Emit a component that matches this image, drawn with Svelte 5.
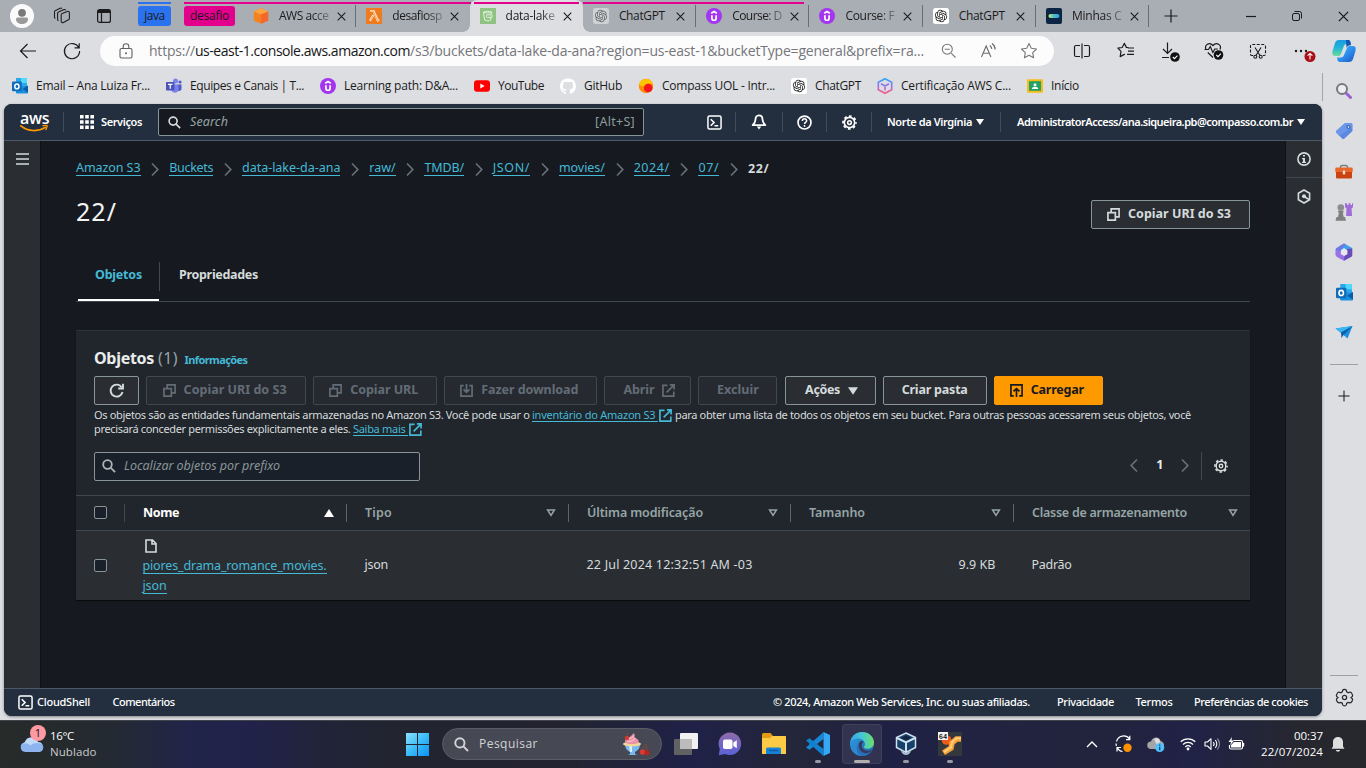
<script>
  // Spreads letter-spacing so that a run of text takes the given width.
  function fit(node, width) {
    const n = [...node.textContent].length;
    const natural = node.getBoundingClientRect().width;
    node.style.letterSpacing = `${(width - natural) / n}px`;
  }

  const openai =
    'M22.2819 9.8211a5.9847 5.9847 0 0 0-.5157-4.9108 6.0462 6.0462 0 0 0-6.5098-2.9A6.0651 6.0651 0 0 0 4.9807 4.1818a5.9847 5.9847 0 0 0-3.9977 2.9 6.0462 6.0462 0 0 0 .7427 7.0966 5.98 5.98 0 0 0 .511 4.9107 6.051 6.051 0 0 0 6.5146 2.9001A5.9847 5.9847 0 0 0 13.2599 24a6.0557 6.0557 0 0 0 5.7718-4.2058 5.9894 5.9894 0 0 0 3.9977-2.9001 6.0557 6.0557 0 0 0-.7475-7.0729zm-9.022 12.6081a4.4755 4.4755 0 0 1-2.8764-1.0408l.1419-.0804 4.7783-2.7582a.7948.7948 0 0 0 .3927-.6813v-6.7369l2.02 1.1686a.071.071 0 0 1 .038.052v5.5826a4.504 4.504 0 0 1-4.4945 4.4944zm-9.6607-4.1254a4.4708 4.4708 0 0 1-.5346-3.0137l.142.0852 4.783 2.7582a.7712.7712 0 0 0 .7806 0l5.8428-3.3685v2.3324a.0804.0804 0 0 1-.0332.0615L9.74 19.9502a4.4992 4.4992 0 0 1-6.1408-1.6464zM2.3408 7.8956a4.485 4.485 0 0 1 2.3655-1.9728V11.6a.7664.7664 0 0 0 .3879.6765l5.8144 3.3543-2.0201 1.1685a.0757.0757 0 0 1-.071 0l-4.8303-2.7865A4.504 4.504 0 0 1 2.3408 7.872zm16.5963 3.8558L13.1038 8.364 15.1192 7.2a.0757.0757 0 0 1 .071 0l4.8303 2.7913a4.4944 4.4944 0 0 1-.6765 8.1042v-5.6772a.79.79 0 0 0-.407-.667zm2.0107-3.0231l-.142-.0852-4.7735-2.7818a.7759.7759 0 0 0-.7854 0L9.409 9.2297V6.8974a.0662.0662 0 0 1 .0284-.0615l4.8303-2.7866a4.4992 4.4992 0 0 1 6.6802 4.66zM8.3065 12.863l-2.02-1.1638a.0804.0804 0 0 1-.038-.0567V6.0742a4.4992 4.4992 0 0 1 7.3757-3.4537l-.142.0805L8.704 5.459a.7948.7948 0 0 0-.3927.6813zm1.0976-2.3654l2.602-1.4998 2.6069 1.4998v2.9994l-2.5974 1.4997-2.6067-1.4997Z';
  const octocat =
    'M12 .297c-6.63 0-12 5.373-12 12 0 5.303 3.438 9.8 8.205 11.385.6.113.82-.258.82-.577 0-.285-.01-1.04-.015-2.04-3.338.724-4.042-1.61-4.042-1.61C4.422 18.07 3.633 17.7 3.633 17.7c-1.087-.744.084-.729.084-.729 1.205.084 1.838 1.236 1.838 1.236 1.07 1.835 2.809 1.305 3.495.998.108-.776.417-1.305.76-1.605-2.665-.3-5.466-1.332-5.466-5.93 0-1.31.465-2.38 1.235-3.22-.135-.303-.54-1.523.105-3.176 0 0 1.005-.322 3.3 1.23.96-.267 1.98-.399 3-.405 1.02.006 2.04.138 3 .405 2.28-1.552 3.285-1.23 3.285-1.23.645 1.653.24 2.873.12 3.176.765.84 1.23 1.91 1.23 3.22 0 4.61-2.805 5.625-5.475 5.92.42.36.81 1.096.81 2.22 0 1.606-.015 2.896-.015 3.286 0 .315.21.69.825.57C20.565 22.092 24 17.592 24 12.297c0-6.627-5.373-12-12-12';

  // Glyph table: [viewBox, markup]
  const glyphs = {
    user: ['0 0 24 24', '<circle cx="12" cy="12" r="12" fill="#fafafa"/><circle cx="12" cy="8.8" r="3.9" fill="#7a7a7a"/><path d="M6 15.2a1.6 1.6 0 0 1 1.6-1.6h8.8a1.6 1.6 0 0 1 1.6 1.6c0 3-2.7 4.8-6 4.8s-6-1.8-6-4.800z" fill="#9a9a9a"/>'],
    spaces: ['0 0 18 18', '<g fill="none" stroke="#1b1b1b" stroke-width="1.050" stroke-linejoin="round"><path d="M8.200 7.800a1.500 1.500 0 0 1 1-1.400l5-2a1.500 1.500 0 0 1 2.200 1.400v5.600a1.500 1.500 0 0 1-1 1.400l-5 2.700a1.500 1.500 0 0 1-2.200-1.300z"/><path d="M5.500 13.800a1.300 1.300 0 0 1-.9-1.300V6.300a1.500 1.500 0 0 1 1-1.400l5.400-2.300a1.500 1.500 0 0 1 1.800.6M2.400 11.400a1.300 1.300 0 0 1-.9-1.300V4.800a1.500 1.500 0 0 1 1-1.400L7.300 1.200a1.500 1.500 0 0 1 1.600.3"/></g>'],
    tabact: ['0 0 14 14', '<rect x=".6" y=".6" width="12.800" height="12.800" rx="2" fill="none" stroke="#1b1b1b" stroke-width="1.200"/><path d="M1 1h12v3H1z" fill="#1b1b1b"/><path d="M4.500 4v9" stroke="#1b1b1b" stroke-width="1.200"/>'],
    awscube: ['0 0 16 16', '<path d="M8 .3 15.200 3.400v9.200L8 15.700.8 12.600V3.400z" fill="#f58220"/><path d="M8 .3 15.200 3.400 8 6.600.8 3.400z" fill="#fba545"/><path d="M8 6.600 15.200 3.400v9.200L8 15.700z" fill="#f4682c"/>'],
    lambda: ['0 0 16 16', '<rect width="16" height="16" fill="#ee7b1d"/><path d="M4.300 3h3.200l4.200 9.300h1.600M7.300 7 4 12.800" fill="none" stroke="#fff3e4" stroke-width="2.200"/><path d="M4.600 3h2.600l4.200 9.300h1.500M7.200 7.200 4.300 12.400" fill="none" stroke="#ee7b1d" stroke-width=".7"/>'],
    bucket: ['0 0 16 16', '<rect width="16" height="16" fill="#8fc283"/><g fill="none" stroke="#e4f3df" stroke-width="1"><path d="M3.500 4.200 4.600 12c2 1.100 4.600 1.100 6 .2l.5-3.700M3.500 4.200c2-1.200 6-1.200 8.300 0l-.3 2.400M3.500 4.200c2 1.100 6 1.100 8.300 0"/><rect x="6.500" y="6.800" width="5.800" height="2.600" rx="1"/></g>'],
    gptgray: ['0 0 16 16', `<rect width="16" height="16" rx="2.500" fill="#cfd1d4"/><path transform="translate(1.800 1.800) scale(.517)" d="${openai}" fill="#66696c"/>`],
    gpt: ['0 0 16 16', `<rect width="16" height="16" rx="2.500" fill="#fff"/><path transform="translate(1.800 1.800) scale(.517)" d="${openai}" fill="#222"/>`],
    udemy: ['0 0 16 16', '<circle cx="8" cy="8" r="8" fill="#a435f0"/><path d="M5.200 5.300 8 3.500l2.800 1.800M5.900 7.200v3c0 2.700 4.200 2.700 4.200 0v-3" fill="none" stroke="#fff" stroke-width="1.700"/>'],
    minhas: ['0 0 16 16', '<defs><linearGradient id="mn"><stop offset="0" stop-color="#d8e86a"/><stop offset=".4" stop-color="#57c3c0"/><stop offset="1" stop-color="#2f9de0"/></linearGradient></defs><rect width="16" height="16" rx="2" fill="#0c2544"/><rect x="2.500" y="6" width="11" height="4" rx="2" fill="url(#mn)"/>'],
    x: ['0 0 10 10', '<path d="M.8.8 9.200 9.200M9.200.8.8 9.200" stroke="#1b1b1b" stroke-width="1.200" fill="none"/>'],
    plus: ['0 0 14 14', '<path d="M7 .5v13M.5 7h13" stroke="#1b1b1b" stroke-width="1.200"/>'],
    minus: ['0 0 10 10', '<path d="M0 5.500h10" stroke="#1b1b1b" stroke-width="1.200"/>'],
    restore: ['0 0 10 10', '<g fill="none" stroke="#1b1b1b"><rect x=".5" y="2.500" width="7" height="7" rx="1.500"/><path d="M2.500.5h5a2 2 0 0 1 2 2v5"/></g>'],
    back: ['0 0 18 18', '<path d="M17 9H1.500M8.500 2 1.500 9l7 7" fill="none" stroke="#1b1b1b" stroke-width="1.200"/>'],
    reload: ['0 0 18 18', '<path d="M15.700 5.500A7.600 7.600 0 1 0 16.600 9M16.200 1.200v4.600h-4.600" fill="none" stroke="#1b1b1b" stroke-width="1.200"/>'],
    lock: ['0 0 14 16', '<g fill="none" stroke="#5f6063" stroke-width="1.100"><rect x="1" y="5.500" width="12" height="9.500" rx="1.500"/><path d="M4.200 5.500V3.600a2.800 2.800 0 0 1 5.600 0v1.900"/></g><circle cx="7" cy="10.300" r="1" fill="#5f6063"/>'],
    zoomout: ['0 0 16 16', '<path d="M14.500 14.500 10.300 10.300M3.800 6.200h5" stroke="#76777a" stroke-width="1.100"/><circle cx="6.300" cy="6.200" r="5" fill="none" stroke="#76777a" stroke-width="1.100"/>'],
    aloud: ['0 0 18 16', '<path d="M1.500 14 6.200 3l4.700 11M3.200 10.300h6M9.800 2.500c1.300 1 1.900 2.200 2 3.500M12 .5c2.200 1.600 3.200 3.500 3.200 6" fill="none" stroke="#6b6c6f" stroke-width="1.100"/>'],
    star: ['0 0 18 18', '<path d="m9 1.500 2.300 4.800 5.200.7-3.800 3.600.9 5.200L9 13.300l-4.600 2.500.9-5.200L1.500 7l5.200-.7z" fill="none" stroke="#76777a" stroke-width="1.100" stroke-linejoin="round"/>'],
    split: ['0 0 18 18', '<path d="M7 3.500H3a1.500 1.500 0 0 0-1.500 1.500v8A1.500 1.500 0 0 0 3 14.500h4M11 3.500h4A1.500 1.500 0 0 1 16.500 5v8a1.500 1.500 0 0 1-1.500 1.500h-4M9 1.500v15" fill="none" stroke="#1b1b1b" stroke-width="1.200"/>'],
    favs: ['0 0 18 18', '<path d="M11.500 5.700 9.400 5.400 7.300 1.400 5.200 5.500.9 6.200 4 9.300l-.8 5.300 4.600-2.500M11 6h6M11 9.200h6M10 12.400h7" fill="none" stroke="#1b1b1b" stroke-width="1.200" stroke-linejoin="round"/>'],
    down: ['0 0 22 22', '<path d="M8.500 2.500v11M4 9l4.500 4.500L13 9M3 17.500h7" fill="none" stroke="#1b1b1b" stroke-width="1.200"/><circle cx="16" cy="17" r="4.800" fill="#111"/><path d="m13.800 17 1.700 1.700 2.900-3" fill="none" stroke="#fff" stroke-width="1.100"/>'],
    heart: ['0 0 22 22', '<path d="M3 9.500C1 5 6.500 1.500 10 5.500c3.500-4 9-.5 7 4M4.800 12.500 10 17.500M1.500 9.500h4l1.800-3 2.500 6 2-3.500h3" fill="none" stroke="#1b1b1b" stroke-width="1.200"/><circle cx="15.500" cy="15" r="4.800" fill="#111"/><path d="m13.300 15 1.700 1.700 2.900-3" fill="none" stroke="#fff" stroke-width="1.100"/>'],
    snip: ['0 0 18 18', '<path d="M4 13.500H3A1.500 1.500 0 0 1 1.500 12V4A1.500 1.500 0 0 1 3 2.500h12A1.500 1.500 0 0 1 16.500 4v8a1.500 1.500 0 0 1-1.500 1.500h-1" fill="none" stroke="#1b1b1b" stroke-width="1.100" stroke-dasharray="3 1.500"/><path d="m6 5.500 5 8M12 5.500l-5 8" stroke="#1b1b1b" stroke-width="1.100"/><g fill="none" stroke="#1b1b1b" stroke-width="1.100"><circle cx="6.300" cy="14.700" r="1.500"/><circle cx="11.700" cy="14.700" r="1.500"/></g>'],
    dots: ['0 0 22 22', '<g fill="#1b1b1b"><circle cx="5" cy="11" r="1.200"/><circle cx="10" cy="11" r="1.200"/><circle cx="15" cy="11" r="1.200"/></g><circle cx="19" cy="16.500" r="5.500" fill="#a80f17"/><path d="M19 19.500v-6M16.600 15.700l2.400-2.300 2.400 2.300" fill="none" stroke="#fff" stroke-width="1.100"/>'],
    copilot: ['0 0 24 24', '<defs><linearGradient id="cp1" x1="0" y1="0" x2="0" y2="1"><stop offset="0" stop-color="#1b9be0"/><stop offset=".5" stop-color="#25b5d5"/><stop offset="1" stop-color="#6bdc9b"/></linearGradient><linearGradient id="cp2" x1="0" y1="0" x2="1" y2="1"><stop offset="0" stop-color="#38c8ee"/><stop offset=".5" stop-color="#2d8ff0"/><stop offset="1" stop-color="#1d53c0"/></linearGradient></defs><path d="M7 1h9c2 0 2.500 1.500 3 4h-4c-2 0-3 1-3.500 3L9 15c-.5 1.500-1.500 2-3 2H3c-3 0-3-3-2.300-5.500L3 4c.6-2 2-3 4-3z" fill="url(#cp1)"/><path d="M17 23H8c-2 0-2.500-1.500-3-4.500h3.500c2 0 3-1 3.500-2.500L15 9c.5-1.500 1.500-2 3-2h3c3 0 3 3 2.300 5.500L21 20c-.6 2-2 3-4 3z" fill="url(#cp2)"/><path d="M14 1h2c2 0 2.500 1.500 3 5.500-2-.5-4 .5-4.500 2.500z" fill="#1454b4"/>'],
    outlook: ['0 0 16 16', '<path d="M4 0h11v15H4z" fill="#2aa8ea"/><path d="M9 0h6v5H9z" fill="#50d9ff"/><path d="M4 8l12 0v6.500a1 1 0 0 1-1 1H5a1 1 0 0 1-1-1z" fill="#1a91dc"/><path d="M16 7.500v7L10.500 11z" fill="#0a5ba8"/><rect x="0" y="3.500" width="9.800" height="9.800" rx="1" fill="#0f6cbd"/><ellipse cx="4.900" cy="8.400" rx="2.100" ry="2.400" fill="none" stroke="#fff" stroke-width="1.500"/>'],
    teams: ['0 0 16 16', '<circle cx="9.500" cy="3" r="2.500" fill="#7b83eb"/><circle cx="14" cy="4" r="1.600" fill="#5059c9"/><path d="M11 6.500h4.500V11a2.500 2.500 0 0 1-4.500 1z" fill="#5059c9"/><path d="M5.500 6.500h7V12a3.600 3.600 0 0 1-7 0z" fill="#7b83eb"/><rect x="0" y="4" width="8.500" height="8.500" rx=".8" fill="#4b53bc"/><path d="M2 6.300h4.500M4.250 6.300v4.400" stroke="#fff" stroke-width="1.200"/>'],
    youtube: ['0 0 16 16', '<rect y="2.200" width="16" height="11.600" rx="3" fill="#f00"/><path d="m6.300 5.500 4.300 2.500-4.300 2.500z" fill="#fff"/>'],
    github: ['0 0 24 24', `<path d="${octocat}" fill="#fff"/>`],
    compass: ['0 0 16 16', '<circle cx="8" cy="8" r="7.200" fill="#ff8a00"/><path d="M1 6.500A7.200 7.200 0 0 1 15 6.300c-1-.5-6-2-8 1.700-2 .8-4.500 0-6-1.500z" fill="#ffc400"/><circle cx="10.200" cy="10" r="4.300" fill="#f4141c"/>'],
    hex: ['0 0 16 16', '<defs><linearGradient id="hx" x1="0" y1="0" x2="0" y2="1"><stop offset="0" stop-color="#2fa8f5"/><stop offset=".55" stop-color="#a86ae8"/><stop offset="1" stop-color="#f5607d"/></linearGradient></defs><path d="M8 .7 14.700 4.300v7.400L8 15.300l-6.700-3.600V4.300zM4 5.700l4 2.300 4-2.300M8 8v4.500" fill="none" stroke="url(#hx)" stroke-width="1.600"/>'],
    classroom: ['0 0 16 16', '<rect y="1.200" width="16" height="13.600" rx="1" fill="#f7bd14"/><rect x="2" y="3.200" width="12" height="9.600" fill="#22a065"/><circle cx="8" cy="6.800" r="1.500" fill="#fff"/><path d="M4.800 11c0-3 6.400-3 6.400 0z" fill="#fff"/>'],
    sbsearch: ['0 0 18 18', '<circle cx="7" cy="7" r="5" fill="#eceded" stroke="#77787b" stroke-width="2"/><path d="m11.500 11.500 4 4" stroke="#9a5fd0" stroke-width="3" stroke-linecap="round"/>'],
    tag: ['0 0 18 18', '<path d="M10 1h6a1.500 1.500 0 0 1 1.500 1.500V9L9.500 16.500c-.8.800-1.600.8-2.400 0L1.500 11c-.8-.8-.8-1.600 0-2.400z" fill="#5b88e0"/><path d="M10 1h6a1.500 1.500 0 0 1 1.500 1.500V5L4 14 1.500 11c-.8-.8-.8-1.600 0-2.400z" fill="#7da6f0" opacity=".5"/><circle cx="13.500" cy="5" r="1.500" fill="#ccdcfb" stroke="#27509c"/>'],
    toolbox: ['0 0 18 18', '<g transform="translate(0 1.500)"><path d="M5.500 5V3.500a1.500 1.500 0 0 1 1.500-1.500h4a1.500 1.500 0 0 1 1.500 1.500V5" fill="none" stroke="#7a7c80" stroke-width="1.500"/><rect x=".3" y="4" width="17.400" height="5" rx="1" fill="#e8682c"/><path d="M1 8.500h16V14a1 1 0 0 1-1 1H2a1 1 0 0 1-1-1z" fill="#cb4310"/><rect x="7.800" y="7" width="2.400" height="4" rx=".8" fill="#f0dcd3"/></g>'],
    chess: ['0 0 18 18', '<path d="M10 .3h2v1.700h1.500V.3h2v1.700H17V.3h1v4l-1.500 1.200.6 7.500h-6l.4-7.500L10 4.300z" fill="#a26cd8"/><circle cx="5.800" cy="4.600" r="3.300" fill="#8d8d8d"/><path d="M3 7.800h5.600v1.600H7.700l1 4.600H10l1 3.800H.5l1-3.800h1.500l1-4.600H3z" fill="#7f7f7f"/>'],
    m365: ['0 0 18 18', '<path d="M9 .4 16.300 4.500a1.500 1.500 0 0 1 1 1.500L12.500 7.500 9 5 5.800 7.500 5 2.700z" fill="#3aa0e8"/><path d="M5.500 2.400 9 .4l2 1.200-5 5V12L2 13.500.7 12V5.500z" fill="#6f78e4"/><path d="M.7 11 6 12l3.500 1.500L9 17.600 1.500 13.500z" fill="#b98af0"/><path d="M.7 6.500 5 8.500 6 11l3.500 2 2.500 2.500L9 17.700 3 14.500.7 12.500z" fill="#9a72e6"/><path d="M12.300 6 17.300 5.500V12a2 2 0 0 1-.8 1.700L9 17.700l.5-5 2.800-1.500z" fill="#6a4bb8"/><path d="M9 5.600 12.200 7.500v3.400L9 12.700l-3.200-1.800V7.500z" fill="#e8e9ef"/>'],
    send: ['0 0 18 18', '<path d="M.5 5.500 17.500 3 12.500 15.500 8.500 12z" fill="#1b8fe0"/><path d="M17.500 3 6 9.500.5 5.500z" fill="#38b6f1"/><path d="M6 9.500 17.500 3 8.500 12 6.500 15z" fill="#0f5ea8"/>'],
    gear6: ['0 0 18 18', '<path d="M9 1.200c.9 0 1.500.2 1.700.9l.4 1.600 1.300.8 1.700-.5c.9-.2 1.500.5 2.100 1.700.6 1.100.8 1.700.2 2.300L15.200 9l1.200 1.100c.6.600.3 1.300-.2 2.300-.6 1.100-1.200 1.900-2.100 1.700l-1.700-.5-1.300.8-.4 1.600c-.2.600-.8.900-1.700.9s-1.500-.3-1.700-.9l-.4-1.600-1.300-.8-1.700.5c-.9.200-1.500-.6-2.100-1.700-.5-1-.8-1.700-.2-2.300L2.800 9 1.600 8c-.6-.6-.4-1.200.2-2.300C2.400 4.500 3 3.800 3.900 4l1.700.5 1.300-.8.4-1.600c.2-.7.800-.9 1.700-.9z" fill="none" stroke="#2b2b2b" stroke-width="1.200"/><circle cx="9" cy="9" r="2" fill="none" stroke="#2b2b2b" stroke-width="1.200"/>'],
    smile: ['0 0 28 7', '<path d="M.8.8c7.500 6 17.500 6 24.500 1.600" fill="none" stroke="#f90" stroke-width="1.700" stroke-linecap="round"/><path d="M22.500.9c2-.6 5-.6 4.700.1-.2 1.300-.8 3-1.600 4.200" fill="none" stroke="#f90" stroke-width="1.300"/>'],
    grid: ['0 0 14 14', '<path d="M0 0h3.600v3.600H0zM5.200 0h3.600v3.600H5.200zM10.400 0H14v3.600h-3.600zM0 5.200h3.600v3.600H0zM5.200 5.200h3.600v3.600H5.200zM10.400 5.200H14v3.600h-3.600zM0 10.400h3.600V14H0zM5.200 10.400h3.600V14H5.200zM10.400 10.400H14V14h-3.600z" fill="#fff"/>'],
    mag: ['0 0 14 14', '<circle cx="5.500" cy="5.500" r="4.300" fill="none" stroke="currentColor" stroke-width="1.800"/><path d="m8.800 8.800 4.300 4.300" stroke="currentColor" stroke-width="1.800"/>'],
    shell: ['0 0 16 16', '<rect x="1" y="1" width="14" height="14" rx="1.800" fill="none" stroke="#fff" stroke-width="1.600"/><path d="m4 4.500 3.500 3.500L4 11.500M8 11.500h4" fill="none" stroke="#fff" stroke-width="1.700"/>'],
    bell: ['0 0 16 16', '<path d="M8 1.300c2.400 0 3.500 1.700 3.500 4.200 0 2.600 1 3.700 2.800 5.700H1.700C3.500 9.200 4.500 8.100 4.500 5.500 4.500 3 5.600 1.300 8 1.300z" fill="none" stroke="#fff" stroke-width="1.800" stroke-linejoin="round"/><path d="M5.800 12.500h4.400L8 15.500z" fill="#fff"/>'],
    help: ['0 0 16 16', '<circle cx="8" cy="8" r="6.900" fill="none" stroke="#fff" stroke-width="1.800"/><path d="M5.700 6.400c0-3 4.600-3 4.600-.2 0 1.700-2.300 1.700-2.300 3.500M8 10.700v1.800" fill="none" stroke="#fff" stroke-width="1.600"/>'],
    gear: ['0 0 16 16', '<g fill="none" stroke="currentColor"><circle cx="8" cy="8" r="6.900" stroke-width="1.900" stroke-dasharray="2.900 2.519" stroke-dashoffset="1.450"/><circle cx="8" cy="8" r="5.500" stroke-width="1.700"/><circle cx="8" cy="8" r="2" stroke-width="1.600"/></g>'],
    caret: ['0 0 8 6', '<path d="M0 0h8L4 6z" fill="currentColor"/>'],
    caretup: ['0 0 10 8', '<path d="M5 0l5 8H0z" fill="#fff"/>'],
    careto: ['0 0 10 8', '<path d="M1.600 1h6.800L5 6.300z" fill="none" stroke="#95a5a6" stroke-width="1.500"/>'],
    menu: ['0 0 13 12', '<path d="M0 1h13M0 6h13M0 11h13" stroke="#d5dbdb" stroke-width="1.600"/>'],
    info: ['0 0 14 14', '<circle cx="7" cy="7" r="6.100" fill="none" stroke="#d5dbdb" stroke-width="1.600"/><path d="M6 3h2v1.600H6zM5 6h3v3.700h1V11H5V9.700h1V7.200H5z" fill="#d5dbdb"/>'],
    hexinfo: ['0 0 14 15', '<path d="m7 1 5.600 3.200v6.600L7 14l-5.600-3.200V4.200z" fill="none" stroke="#d5dbdb" stroke-width="1.600"/><circle cx="7" cy="7.300" r="2" fill="#d5dbdb"/><path d="m7 7.500 5 3" stroke="#d5dbdb" stroke-width="1.500"/>'],
    chev: ['0 0 8 12', '<path d="m1 0 5.800 6L1 12" fill="none" stroke="currentColor" stroke-width="1.700"/>'],
    copy: ['0 0 14 14', '<path d="M1 5h8v8H1zM4.500 4.500V1H13v8.500H9.500" fill="none" stroke="currentColor" stroke-width="1.800"/>'],
    refresh: ['0 0 16 16', '<path d="M13.500 9A6 6 0 1 1 12.600 4.200M14 .8v4.700H9.200" fill="none" stroke="#d5dbdb" stroke-width="1.900"/>'],
    save: ['0 0 14 14', '<path d="M4 1.800H1v11.300h12V1.800h-3M7 0v8.500M3.800 5.800 7 9l3.200-3.200" fill="none" stroke="currentColor" stroke-width="1.800"/>'],
    upload: ['0 0 14 14', '<path d="M4 12.700H1V1h12v11.700h-3M7 14V5.500M3.800 8 7 4.900 10.200 8" fill="none" stroke="currentColor" stroke-width="1.800"/>'],
    ext: ['0 0 14 14', '<path d="M6 1.400H1v11.700h11.700V8M5 9l7.500-7.500M8.500 1H13v4.800" fill="none" stroke="currentColor" stroke-width="1.800"/>'],
    file: ['0 0 12 14', '<path d="M1 1h6.500L11 4.500V13H1zM7 1v4h4" fill="none" stroke="#d5dbdb" stroke-width="1.600"/>'],
    windows: ['0 0 23 23', '<defs><linearGradient id="wn" x1="0" y1="0" x2="1" y2="1"><stop offset="0" stop-color="#8be2fc"/><stop offset=".5" stop-color="#3bbcf8"/><stop offset="1" stop-color="#0a91f5"/></linearGradient></defs><path d="M0 0h11v11H0zM12 0h11v11H12zM0 12h11v11H0zM12 12h11v11H12z" fill="url(#wn)"/>'],
    sundae: ['0 0 28 24', '<path d="M3 12h15c0 5-3 7-5 8v2l2 1H6l2-1v-2c-2-1-5-3-5-8z" fill="#79b7ec"/><path d="M7 13h3v7H8z" fill="#d8f0fb"/><ellipse cx="10" cy="12" rx="9" ry="2.500" fill="#f1d59b"/><path d="M3.500 10.500C2 7 5 6.500 7 5.500c2-1 3-3 5-4.500 1 2 0 3.500 1 4.500s4.500 2 3.500 5c-3 2-10 2-13 0z" fill="#eb91a8"/><path d="M5 9c4 1 7 0 8-3M6 6.500c3 0 5-1 6-3" stroke="#fbd0d5" fill="none" stroke-width="1"/><circle cx="5" cy="6" r="2.200" fill="#d8392f"/><path d="M4 3 6 1" stroke="#7c4a2c"/><circle cx="20.500" cy="20" r="2.800" fill="#d93a33"/><circle cx="25" cy="20.500" r="2.600" fill="#b8241f"/><path d="M20.500 17.500 24 12l1 6" fill="none" stroke="#8a4b34" stroke-width=".8"/>'],
    taskview: ['0 0 24 24', '<rect x="0" y="7" width="18" height="16" rx="1" fill="#626262"/><rect x="6" y="1" width="18" height="16" rx="1" fill="#f1f1f1"/><path d="M6 7h12v10H7a1 1 0 0 1-1-1z" fill="#bcbcbc"/>'],
    chat: ['0 0 24 24', '<defs><linearGradient id="ch" x1="0" y1="0" x2="0" y2="1"><stop offset="0" stop-color="#8f6aa8"/><stop offset="1" stop-color="#5a62d8"/></linearGradient></defs><path d="M12 .5a11.300 11.300 0 1 1-5 21.500L.8 23.300 1.800 17A11.300 11.300 0 0 1 12 .5z" fill="url(#ch)"/><rect x="5" y="7.500" width="9.500" height="9.500" rx="1.800" fill="#fff"/><path d="m15.300 10.500 3.500-2.300v8l-3.500-2.300z" fill="#fff"/>'],
    folder: ['0 0 24 24', '<path d="M0 2.500A1.500 1.500 0 0 1 1.500 1h7L11 4h12a1 1 0 0 1 1 1v7H0z" fill="#e39c12"/><path d="M0 6h8l2-2h13a1 1 0 0 1 1 1v17H0z" fill="#fccb45"/><path d="M4 22v-5a1.500 1.500 0 0 1 1.500-1.500h12A1.500 1.500 0 0 1 19 17v5z" fill="#1683d8"/><path d="M7 18.500h9" stroke="#0d5ca8" stroke-width="1.500"/>'],
    vscode: ['0 0 24 24', '<path d="M17.500 0v7L3.500 17.800 0 15.500z" fill="#1787d4"/><path d="M17.500 24v-7L3.500 6.200 0 8.500z" fill="#1280cc"/><path d="M17.500 0 24 3v18l-6.500 3z" fill="#34a8f2"/>'],
    edge: ['0 0 24 24', '<defs><linearGradient id="eg" x1="0" y1="0" x2="1" y2="0"><stop offset="0" stop-color="#279be0"/><stop offset=".5" stop-color="#35c4d4"/><stop offset="1" stop-color="#63da5b"/></linearGradient><linearGradient id="eb" x1="0" y1="0" x2="1" y2="1"><stop offset="0" stop-color="#1b9de8"/><stop offset="1" stop-color="#0a4f9f"/></linearGradient></defs><circle cx="12" cy="12" r="12" fill="url(#eb)"/><path d="M.3 10C1.500 3.500 6.500 0 12 0c7 0 12 5 12 10.500 0 4-3 6.300-6.500 6.300-2.500 0-4-1-3.500-2 .8-1 1-1.500 1-2.800C15 9 12 6.500 8.500 6.500 5 6.500 1.500 8 .3 10z" fill="url(#eg)"/><path d="M13.500 9.300c-2.500-1.300-5 .7-5 3.700 0 5 3.500 8.500 8 8.300 2.500-.2 4.500-1.500 5.700-3.300-1 .6-2 .8-3.500.8-4 0-7-2-7-5 0-1.600.6-2.500 1.800-4.500z" fill="#262a4d"/><path d="M7.500 9.500C4.500 14 7 22 13 23.900c-1 .1-2 .1-3-.1C5 22.800 1.500 19 1 15c1-3 3.500-5 6.500-5.500z" fill="#1b7fd0"/><path d="M8.500 13c0 5 3.500 8.500 8 8.300 2.300-.2 4.200-1.300 5.500-3-2 3.700-6 5.700-10 5.700-5-1-6.500-7-3.500-11z" fill="#1463b5"/>'],
    vbox: ['0 0 24 24', '<path d="M12 1 21.500 5.500v10L12 20.500l-9.500-5v-10z" fill="#17406b" stroke="#cfe0ee" stroke-width="1.500"/><path d="m3 6 9 4.500L21 6M12 10.500V20" fill="none" stroke="#cfe0ee" stroke-width="2"/><path d="M12 3.500 17 6l-5 2.300L7 6z" fill="#12263f"/><path d="M7 18.500c.5 3 3 4.500 5 4.500s4.500-1.500 5-4.500l-5 2.500z" fill="#a9bccf"/>'],
    app64: ['0 0 24 24', '<rect width="24" height="24" fill="#33383d"/><circle cx="8.500" cy="8" r="4.800" fill="#ef5a1b"/><path d="M23 7h-4.500l-4.500 4-1 5-7.500 4.800" fill="none" stroke="#f9a03c" stroke-width="5.500"/><path d="M23 6.300h-4.500l-4.500 4-1 5-7 4.800" fill="none" stroke="#ffd073" stroke-width="2"/><rect width="10" height="8" fill="#f4f4f4"/><text x=".8" y="6.900" font-size="7" font-weight="700" font-family="Liberation Mono, monospace" fill="#222">64</text>'],
    weather: ['0 0 26 18', '<path d="M6.500 17a5.300 5.300 0 0 1-.6-10.500C7.500 3 10 1.500 13 1.500c3.500 0 6 2.300 6.800 5.200C23 6.700 25.500 8.700 25.500 12s-2 5-4.500 5z" fill="#8db4ee"/><path d="M4 8.500c3-2 6-.5 8 1.500 3-3 8-3 12-1.500-1-1.500-2.500-1.800-4.200-1.800C19 3.800 16.500 1.500 13 1.500S7.500 3 5.900 6.500c-.8.300-1.500 1-1.900 2z" fill="#c2dafa"/>'],
    up: ['0 0 12 7', '<path d="m1 6 5-5 5 5" fill="none" stroke="#fff" stroke-width="1.400"/>'],
    sync: ['0 0 18 18', '<path d="M1.500 6.500A7.300 7.300 0 0 1 14.500 4M14.800.8v3.800H11M1 8.500c0 1 0 1.500.5 2.500M2 16.500v-4h4M2.500 13c1 2 3 3.300 5 3.500" fill="none" stroke="#fff" stroke-width="1.200"/><circle cx="12.500" cy="12.700" r="4.200" fill="#ff9100"/>'],
    cloudinfo: ['0 0 18 18', '<path d="M4 14a3.700 3.700 0 0 1 0-7.500C5 3.500 7 2.500 9 2.500c2.500 0 4 1.500 4.500 3.500C15.500 6.500 17 8 17 10s-1.500 4-3 4z" fill="#a5a5a8"/><path d="M7 4c3-2 6 0 6 3l-3 3z" fill="#dedee0"/><circle cx="12.700" cy="12.500" r="4.600" fill="#53c0fb"/><path d="M12.700 11.700v3.500M12.700 9.500v1.300" stroke="#0c4a77" stroke-width="1.300"/>'],
    wifi: ['0 0 16 14', '<g fill="none" stroke="#fff" stroke-width="1.200"><path d="M.7 4.800a10.500 10.500 0 0 1 14.600 0M3 7.500a7 7 0 0 1 10 0M5.300 10a3.900 3.900 0 0 1 5.400 0"/></g><circle cx="8" cy="12" r="1.400" fill="#fff"/>'],
    volume: ['0 0 16 14', '<path d="M1 5v4h2.500L7 12.300V1.700L3.500 5z" fill="none" stroke="#fff" stroke-width="1.100" stroke-linejoin="round"/><path d="M9.300 5a3 3 0 0 1 0 4M11.300 3.200a5.500 5.500 0 0 1 0 7.600" fill="none" stroke="#fff" stroke-width="1.100"/><path d="M13.300 1.500a8 8 0 0 1 0 11" fill="none" stroke="#8a8aa0" stroke-width="1.100"/>'],
    battery: ['0 0 17 14', '<path d="M5.500 3.500H13A1.500 1.500 0 0 1 14.500 5v5.500A1.500 1.500 0 0 1 13 12H3a1.500 1.500 0 0 1-1.500-1.500V8" fill="none" stroke="#fff" stroke-width="1.200"/><path d="M6 5h7v5.500H3V8zM15 6h1.200v3.500H15z" fill="#fff"/><path d="M4 0 .5 5H3L2 8.500 6 3.500H3.500z" fill="#fff"/>'],
    notify: ['0 0 14 17', '<path d="M7 1c3 0 5 2.200 5 5v4.500l1.500 2.300H.5L2 10.500V6c0-2.800 2-5 5-5zM5 14h4c0 2.300-4 2.300-4 0z" fill="#dedede"/>'],
  };

  const tabs = [
    { icon: 'awscube', title: 'AWS acce', w: 49.500, sep: true },
    { icon: 'lambda', title: 'desafiosp', w: 49.500 },
    { icon: 'bucket', title: 'data-lake', w: 49, active: true },
    { icon: 'gptgray', title: 'ChatGPT', w: 46, sep: true },
    { icon: 'udemy', title: 'Course: D', w: 49.500, sep: true },
    { icon: 'udemy', title: 'Course: F', w: 49, sep: true },
    { icon: 'gpt', title: 'ChatGPT', w: 46, sep: true },
    { icon: 'minhas', title: 'Minhas C', w: 49.500, sep: true },
  ];
  const bookmarks = [
    { icon: 'outlook', text: 'Email – Ana Luiza Fr...', w: 114 },
    { icon: 'teams', text: 'Equipes e Canais | T...', w: 114 },
    { icon: 'udemy', text: 'Learning path: D&A...', w: 114 },
    { icon: 'youtube', text: 'YouTube', w: 46 },
    { icon: 'github', text: 'GitHub', w: 38 },
    { icon: 'compass', text: 'Compass UOL - Intr...', w: 113 },
    { icon: 'gpt', text: 'ChatGPT', w: 46 },
    { icon: 'hex', text: 'Certificação AWS C...', w: 110 },
    { icon: 'classroom', text: 'Início', w: 28 },
  ];
  const crumbs = [
    ['Amazon S3', 64.5], ['Buckets', 44], ['data-lake-da-ana', 98.500], ['raw/', 26.500], ['TMDB/', 39.500],
    ['JSON/', 37.500], ['movies/', 46], ['2024/', 36], ['07/', 21],
  ];
  const buttons = [
    { text: 'Copiar URI do S3', icon: 'copy', w: 160, tw: 103, off: true },
    { text: 'Copiar URL', icon: 'copy', w: 124, tw: 68, off: true },
    { text: 'Fazer download', icon: 'save', w: 153, tw: 97, off: true },
    { text: 'Abrir', icon: 'ext', w: 87, tw: 31, off: true, after: true },
    { text: 'Excluir', w: 79, tw: 42, off: true },
    { text: 'Ações', icon: 'caret', w: 91, tw: 35, after: true },
    { text: 'Criar pasta', w: 104, tw: 66 },
    { text: 'Carregar', icon: 'upload', w: 109, tw: 53, primary: true },
  ];
  const columns = [
    ['Nome', 36], ['Tipo', 27], ['Última modificação', 116], ['Tamanho', 56], ['Classe de armazenamento', 155],
  ];
  const sidebar = ['sbsearch', 'tag', 'toolbox', 'chess', 'm365', 'outlook', 'send'];
  const apps = ['taskview', 'chat', 'folder', 'vscode', 'edge', 'vbox', 'app64'];
</script>

{#snippet icon(name, w, h = w)}
  <svg width={w} height={h} viewBox={glyphs[name][0]} aria-hidden="true">{@html glyphs[name][1]}</svg>
{/snippet}

<div class="screen">
  <div class="tabbar">
    <div class="tabtools">
      <span class="cell profile">{@render icon('user', 24)}</span>
      <span class="cell spaces">{@render icon('spaces', 18)}</span>
      <span class="cell actions">{@render icon('tabact', 14)}</span>
      <span class="chip blue"><span use:fit={20.500}>java</span></span>
      <span class="chip pink"><span use:fit={39}>desafio</span></span>
    </div>
    {#each tabs as t}
      <div class="tab" class:active={t.active} class:sep={t.sep}>
        {@render icon(t.icon, 16)}
        <span class="title" class:short={t.title === 'ChatGPT'}><span use:fit={t.w}>{t.title}</span></span>
        {@render icon('x', 9)}
      </div>
    {/each}
    <span class="cell newtab">{@render icon('plus', 14)}</span>
    <div class="winctl">
      <span class="cell">{@render icon('minus', 10)}</span>
      <span class="cell">{@render icon('restore', 10)}</span>
      <span class="cell">{@render icon('x', 11)}</span>
    </div>
    <i class="groupline one"></i>
    <i class="groupline two"></i>
    <i class="groupline three"></i>
  </div>

  <div class="toolbar">
    <span class="cell back">{@render icon('back', 18)}</span>
    <span class="cell reload">{@render icon('reload', 18)}</span>
    <div class="address">
      <span class="cell lock">{@render icon('lock', 14, 16)}</span>
      <span class="url"><span use:fit={46}>https://</span><b use:fit={215}>us-east-1.console.aws.amazon.com</b><span use:fit={514}>/s3/buckets/data-lake-da-ana?region=us-east-1&bucketType=general&prefix=ra...</span></span>
      <span class="cell">{@render icon('zoomout', 16)}</span>
      <span class="cell">{@render icon('aloud', 18, 16)}</span>
      <span class="cell">{@render icon('star', 18)}</span>
    </div>
    <div class="tools">
      {#each ['split', 'favs', 'down', 'heart', 'snip', 'dots'] as n}
        <span class="cell">{@render icon(n, ['down', 'heart', 'dots'].includes(n) ? 22 : 18)}</span>
      {/each}
    </div>
    <span class="cell copilot">{@render icon('copilot', 24)}</span>
  </div>

  <div class="below">
    <div class="left">
      <div class="bookmarks">
        {#each bookmarks as b}
          <span class="bm">{@render icon(b.icon, 16)}<span use:fit={b.w}>{b.text}</span></span>
        {/each}
      </div>

      <div class="web">
        <header>
          <div class="logo"><span>aws</span>{@render icon('smile', 28, 7)}</div>
          <div class="services">{@render icon('grid', 14)}<span use:fit={41}>Serviços</span></div>
          <div class="search">
            {@render icon('mag', 13)}
            <em use:fit={38}>Search</em>
            <span use:fit={40}>[Alt+S]</span>
          </div>
          <div class="hicons">
            <span class="cell">{@render icon('shell', 15)}</span>
            <span class="cell">{@render icon('bell', 16)}</span>
            <span class="cell">{@render icon('help', 15)}</span>
            <span class="cell">{@render icon('gear', 15)}</span>
          </div>
          <div class="menu region"><span use:fit={85}>Norte da Virgínia</span>{@render icon('caret', 8, 6)}</div>
          <div class="menu account"><span use:fit={276}>AdministratorAccess/ana.siqueira.pb@compasso.com.br</span>{@render icon('caret', 8, 6)}</div>
        </header>

        <div class="body">
          <nav class="rail">{@render icon('menu', 13, 12)}</nav>
          <main>
            <div class="crumbs">
              {#each crumbs as [name, w]}
                <a href="#top" use:fit={w}>{name}</a>
                {@render icon('chev', 8, 13)}
              {/each}
              <b use:fit={21}>22/</b>
            </div>
            <div class="head">
              <h1 use:fit={41}>22/</h1>
              <button class="btn copyuri">{@render icon('copy', 13)}<span use:fit={103}>Copiar URI do S3</span></button>
            </div>
            <div class="tabs">
              <div class="t on"><span use:fit={47}>Objetos</span></div>
              <div class="t"><span use:fit={79}>Propriedades</span></div>
            </div>

            <section>
              <div class="heading">
                <h2 use:fit={60}>Objetos</h2><span class="count" use:fit={20}>(1)</span><a href="#info" use:fit={63}>Informações</a>
              </div>
              <div class="btns">
                <button class="btn refresh">{@render icon('refresh', 16)}</button>
                {#each buttons as b}
                  <button class="btn" class:off={b.off} class:primary={b.primary} class:after={b.after} style:width="{b.w}px">
                    {#if b.icon === 'caret'}{@render icon('caret', 10, 8)}{:else if b.icon}{@render icon(b.icon, 13)}{/if}
                    <span use:fit={b.tw}>{b.text}</span>
                  </button>
                {/each}
              </div>
              <div class="desc">
                <div><span use:fit={438}>Os objetos são as entidades fundamentais armazenadas no Amazon S3. Você pode usar o{' '}</span><a href="#inv" use:fit={126}>inventário do Amazon S3{' '}</a>{@render icon('ext', 13)}<span class="rest" use:fit={516}>para obter uma lista de todos os objetos em seu bucket. Para outras pessoas acessarem seus objetos, você</span></div>
                <div><span use:fit={259}>precisará conceder permissões explicitamente a eles.{' '}</span><a href="#more" use:fit={55}>Saiba mais{' '}</a>{@render icon('ext', 13)}</div>
              </div>
              <div class="filter">
                <div class="box">{@render icon('mag', 14)}<em use:fit={156}>Localizar objetos por prefixo</em></div>
                <div class="pager">
                  <span class="flip">{@render icon('chev', 8, 13)}</span>
                  <b>1</b>
                  <span>{@render icon('chev', 8, 13)}</span>
                  <span class="pref">{@render icon('gear', 14)}</span>
                </div>
              </div>
              <div class="row th">
                <div class="check"><i></i></div>
                {#each columns as [name, w], k}
                  <div class="c" class:sorted={k === 0}><span use:fit={w}>{name}</span>{@render icon(k ? 'careto' : 'caretup', 10, 8)}</div>
                {/each}
              </div>
              <div class="row td">
                <div class="check"><i></i></div>
                <div class="c file">
                  {@render icon('file', 12, 14)}
                  <a href="#file" use:fit={184}>piores_drama_romance_movies.</a>
                  <a href="#file" use:fit={24}>json</a>
                </div>
                <div class="c"><span use:fit={23.500}>json</span></div>
                <div class="c"><span use:fit={166}>22 Jul 2024 12:32:51 AM -03</span></div>
                <div class="c num"><span use:fit={37}>9.9 KB</span></div>
                <div class="c"><span use:fit={40}>Padrão</span></div>
              </div>
            </section>
          </main>
          <aside>
            <span class="cell">{@render icon('info', 14)}</span>
            <span class="cell">{@render icon('hexinfo', 14, 15)}</span>
          </aside>
        </div>

        <footer>
          {@render icon('shell', 15)}
          <span class="cs" use:fit={53}>CloudShell</span>
          <span class="com" use:fit={62}>Comentários</span>
          <span class="legal" use:fit={257}>© 2024, Amazon Web Services, Inc. ou suas afiliadas.</span>
          <span use:fit={57}>Privacidade</span>
          <span use:fit={37}>Termos</span>
          <span use:fit={114}>Preferências de cookies</span>
        </footer>
      </div>
    </div>

    <div class="sidebar">
      {#each sidebar as s}
        <span class="cell">{@render icon(s, s === 'outlook' ? 17 : 18)}</span>
      {/each}
      <hr />
      <span class="cell add">{@render icon('plus', 12)}</span>
      <hr class="low" />
      <span class="cell">{@render icon('gear6', 19)}</span>
    </div>
  </div>

  <div class="taskbar">
    <div class="weather">
      <span class="pic">{@render icon('weather', 25, 17)}<b>1</b></span>
      <div class="lines"><span use:fit={24}>16°C</span><small use:fit={46.500}>Nublado</small></div>
    </div>
    <span class="cell win">{@render icon('windows', 23)}</span>
    <div class="tsearch">
      {@render icon('mag', 15)}
      <span use:fit={59}>Pesquisar</span>
      {@render icon('sundae', 28, 24)}
    </div>
    <div class="apps">
      {#each apps as a}
        <span class="app" class:run={['vscode', 'edge', 'vbox', 'app64'].includes(a)} class:focus={a === 'edge'}>{@render icon(a, 24)}</span>
      {/each}
    </div>
    <div class="tray">
      <span class="cell wide">{@render icon('up', 12, 7)}</span>
      <span class="cell wide">{@render icon('sync', 18)}</span>
      <span class="cell wide">{@render icon('cloudinfo', 18)}</span>
      <span class="cell first">{@render icon('wifi', 16, 14)}</span>
      <span class="cell">{@render icon('volume', 16, 14)}</span>
      <span class="cell">{@render icon('battery', 17, 14)}</span>
    </div>
    <div class="clock"><span use:fit={29}>00:37</span><span use:fit={62}>22/07/2024</span></div>
    <span class="cell notify">{@render icon('notify', 14, 17)}</span>
  </div>
</div>

<style>
  :global(body) { overflow: hidden; }
  * { box-sizing: border-box; }
  svg { display: block; flex: none; overflow: visible; }
  .screen {
    width: 1366px; height: 768px; display: flex; flex-direction: column; background: #dddee2;
    font: 12px/16px 'Open Sans', 'Noto Sans', sans-serif; color: #1b1b1b; white-space: nowrap;
  }
  .screen :global(span), em { flex: none; }
  .cell { display: flex; align-items: center; justify-content: center; }

  .tabbar { position: relative; height: 32px; background: #a9adb4; display: flex; }
  .tabtools { width: 243px; display: flex; align-items: center; }
  .profile { width: 24px; margin-left: 10px; }
  .spaces { width: 18px; margin-left: 19px; }
  .actions { width: 14px; margin-left: 26px; }
  .chip { height: 20px; border-radius: 3px; display: flex; align-items: center; justify-content: center; }
  .chip span { line-height: 18px; }
  .blue { width: 33px; margin-left: 27px; background: #2a72ee; }
  .pink { width: 51px; margin-left: 13px; background: #e3008c; }
  .tab { width: 113.300px; padding-left: 10px; display: flex; align-items: center; position: relative; }
  .tab .title { width: 50px; margin: 0 7.500px 0 10px; mask-image: linear-gradient(90deg, #000 65%, #0005 100%); }
  .tab .title.short { mask-image: none; }
  .tab .title span { display: inline-block; }
  .tab.sep { border-right: 1px solid transparent; border-image: linear-gradient(transparent 6px, #6c6e72 6px 26px, transparent 26px) 1; }
  .active { background: #dddee2; border-radius: 7px 7px 0 0; }
  .active::before, .active::after {
    content: ''; position: absolute; bottom: 0; width: 7px; height: 7px; left: -7px;
    background: radial-gradient(circle at 0 0, transparent 6.500px, #dddee2 7px);
  }
  .active::after { left: auto; right: -7px; background: radial-gradient(circle at 100% 0, transparent 6.500px, #dddee2 7px); }
  .newtab { width: 43px; }
  .winctl { display: flex; margin-left: auto; }
  .winctl .cell { width: 46px; }
  .groupline { position: absolute; top: 2px; height: 2px; background: #e3008c; left: 184px; width: 287px; }
  .groupline.one { left: 138px; width: 33px; background: #2a72ee; }
  .groupline.three { left: 474px; width: 330px; background: linear-gradient(90deg, #e3008c 105px, transparent 105px 109px, #e3008c 109px); }

  .toolbar { height: 38px; display: flex; align-items: center; }
  .back { width: 56px; }
  .reload { width: 32px; }
  .address { margin-left: 12px; width: 954px; height: 30px; border-radius: 15px; background: #fcfcfd; display: flex; align-items: center; }
  .address .cell { width: 40px; }
  .address .lock { width: 26px; margin-left: 13px; }
  .url { width: 780px; margin-left: 10px; font-size: 14px; line-height: 28px; color: #75767a; display: flex; }
  .url b { font-weight: 400; color: #161616; flex: none; }
  .tools { display: flex; margin-left: 6px; }
  .tools .cell { width: 44px; }
  .copilot { width: 40px; }

  .below { height: 650px; display: flex; }
  .left { width: 1322px; display: flex; flex-direction: column; }
  .bookmarks { height: 34px; padding: 0 0 2px 12px; display: flex; align-items: center; gap: 16px; }
  .bm { display: flex; align-items: center; gap: 8px; line-height: 18px; }

  .web {
    margin-left: 4px; width: 1318px; height: 612px; border-radius: 8px; overflow: hidden; background: #16191f;
    box-shadow: 0 1px 3px #0006; display: flex; flex-direction: column;
    font: 12.500px/18px 'Noto Sans', 'Open Sans', sans-serif; color: #d5dbdb;
  }
  header { height: 37px; background: #232f3e; border-bottom: 1px solid #4d5966; display: flex; align-items: center; color: #fff; font-size: 11px; font-weight: 600; }
  .logo { width: 44px; margin-left: 16px; height: 20px; display: flex; flex-direction: column; }
  .logo span { font: 600 16px/14px 'Open Sans', sans-serif; letter-spacing: -.3px; height: 13px; margin-top: -1px; }
  .logo svg { margin-top: 1px; }
  .services { height: 20px; border-left: 1px solid #414d5c; padding-left: 16px; margin-left: -1px; width: 96px; display: flex; align-items: center; gap: 7px; }
  .services span { margin-top: -1px; }
  .search { width: 486px; height: 28px; margin-left: -1px; background: #16191f; border: 1px solid #879596; border-radius: 2px; display: flex; align-items: center; padding: 0 8px 0 9px; color: #d5dbdb; font-size: 12.500px; font-weight: 400; }
  .search em { margin: -1px auto 0 9px; color: #95a5a6; }
  .search span { color: #8d9b9c; margin-top: -1px; }
  .hicons { display: flex; margin-left: 50px; }
  .hicons .cell { height: 20px; width: 47px; border-right: 1px solid #414d5c; }
  .hicons .cell:first-child { width: 42px; }
  .hicons .cell:nth-child(3) { width: 44px; }
  .hicons .cell:nth-child(4) { width: 45px; }
  .menu { height: 20px; display: flex; align-items: center; gap: 4px; padding-left: 15px; }
  .menu span { margin-top: -1px; }
  .region { width: 129px; border-right: 1px solid #414d5c; }
  .account { padding-left: 16px; }

  .body { height: 547px; display: flex; }
  .rail { width: 37px; background: #2a2e33; border-right: 1px solid #0f1215; padding: 12px 0 0 12px; }
  main { width: 1244px; padding: 18px 35px 0; }
  .crumbs { display: flex; align-items: center; height: 18px; color: #687078; }
  .crumbs svg { margin: 2px 10.150px 0 10.600px; }
  a { color: #44b9d6; text-decoration: none; display: inline-block; border-bottom: 1px solid #44b9d6; line-height: 15px; }
  .crumbs a, .crumbs b { flex: none; }
  .crumbs b { color: #d5dbdb; line-height: 17px; }
  .head { height: 46px; margin-top: 10px; display: flex; justify-content: space-between; }
  h1 { font-size: 25px; line-height: 32px; font-weight: 400; margin: 8px 0 0; color: #f2f3f3; align-self: flex-start; }
  .btn {
    height: 29px; background: #2a2e33; border: 1px solid #879596; border-radius: 2px; color: #d5dbdb; padding: 0; flex: none;
    display: flex; align-items: center; justify-content: center; gap: 8px; font: 700 12.500px/18px 'Noto Sans', sans-serif; white-space: nowrap;
  }
  .btn span { margin-top: -2px; }
  .btn span:nth-child(2) { margin-right: 3px; }
  .copyuri { width: 159px; margin-top: 13px; }
  .tabs { height: 56px; margin-top: 13px; border-bottom: 1px solid #414750; display: flex; }
  .t { position: relative; padding: 20px 0 0 19px; font-weight: 700; }
  .t span { display: inline-block; line-height: 18px; margin-top: -3px; }
  .t.on { width: 84px; border-right: 1px solid transparent; border-image: linear-gradient(transparent 16px, #414750 16px 44px, transparent 44px) 1; color: #44b9d6; }
  .t.on::after { content: ''; position: absolute; left: 2px; right: 0; bottom: 0; height: 2px; background: #fff; }

  section { width: 1174px; height: 270px; margin-top: 28px; background: #21252c; border-top: 1px solid #2d3238; box-shadow: 0 1px 1px #0008; }
  .heading { height: 45px; padding: 9px 18px 0; display: flex; align-items: center; }
  h2 { font-size: 16px; line-height: 20px; margin: 0 4px 0 0; color: #eaeded; }
  .count { font-size: 16px; color: #95a5a6; }
  .heading a { font-size: 11px; font-weight: 700; border: 0; margin-left: 6.500px; padding-top: 3px; }
  .btns { padding-left: 18px; display: flex; gap: 7.100px; }
  .refresh { width: 45px; }
  .btn.off { border-color: #414750; color: #636c76; background: #262a30; }
  .btn.primary { background: #f90; border-color: #f90; color: #16191f; }
  .btn.after { flex-direction: row-reverse; }
  .btn.after span { margin-right: 0; margin-left: 3px; }
  .desc { padding: 3px 18px 0; font-size: 11px; }
  .desc div { height: 14px; display: flex; align-items: center; }
  .desc span, .desc a { line-height: 14px; white-space: pre; flex: none; }
  .desc a { line-height: 13px; }
  .desc svg { color: #44b9d6; margin-left: 1px; margin-top: 1px; }
  .desc .rest { margin-left: 3px; }
  .filter { height: 43px; margin-top: 15.800px; padding: 0 18px; display: flex; }
  .box { width: 326px; height: 29px; background: #1a2029; border: 1px solid #879596; border-radius: 2px; display: flex; align-items: center; padding-left: 7px; gap: 8px; color: #aab7b8; }
  .box em { color: #879596; margin-top: -1px; }
  .pager { margin-left: auto; height: 28px; display: flex; align-items: center; color: #687078; }
  .flip { transform: scaleX(-1); }
  .pager b { color: #eaeded; margin: -2px 17px 0 18px; }
  .pref { border-left: 1px solid #414750; margin-left: 12px; padding: 7px 4.500px 0 12px; height: 28px; color: #d5dbdb; }
  .row { display: grid; grid-template-columns: 48px 222px 222px 222px 223px 237px; align-items: center; }
  .th { height: 36px; border: solid #414750; border-width: 1px 0; color: #95a5a6; font-weight: 600; }
  .th .c { height: 18px; border-left: 1px solid #5c656e; padding: 0 12px 0 18px; display: flex; align-items: center; justify-content: space-between; }
  .th .c span { margin-top: 0; }
  .th .sorted { color: #fff; font-weight: 700; border-color: #414750; }
  .td .c { padding-left: 18.500px; line-height: 18px; margin-top: -1px; }
  .td { height: 69px; background: #2a2e33; color: #d5dbdb; }
  .check { padding-left: 18px; }
  .check i { display: block; width: 13px; height: 13px; border: 1px solid #879596; border-radius: 2px; background: #1a2029; }
  .td .file { padding-top: 8px; display: flex; flex-direction: column; align-items: flex-start; }
  .file svg { margin: 0 0 6px 2px; }
  .file a { line-height: 14px; margin-bottom: 5px; }
  .td .num { display: flex; justify-content: flex-end; padding-right: 17.500px; }
  aside { width: 37px; background: #2a2e33; border-left: 1px solid #0f1215; }
  aside .cell { height: 37px; border-bottom: 1px solid #414750; }
  aside .cell + .cell { border: 0; }
  footer { height: 28px; background: #232f3e; border-top: 1px solid #4d5966; display: flex; align-items: center; padding-left: 14px; color: #fff; font-size: 11px; font-weight: 500; }
  footer span { margin-top: -2px; margin-right: 21.500px; }
  footer .cs { margin-left: 4px; margin-right: 22.500px; }
  footer .com { margin-right: auto; }
  footer .legal { margin-right: 27px; }
  footer span:last-child { margin-right: 14px; }

  .sidebar { width: 44px; padding-top: 1px; display: flex; flex-direction: column; align-items: center; padding-right: 1px; border-left: 1px solid; border-image: linear-gradient(transparent 4px, #a5a6aa 4px 32px, transparent 32px) 1; }
  .sidebar .cell { height: 40.200px; }
  hr { width: 28px; margin: 12px 0 11px; border: 0; border-top: 1px solid #9fa0a4; }
  .low { margin: 258px 0 2px; }

  .taskbar {
    height: 48px; border-top: 1px solid #42444b; padding-bottom: 1px; display: flex; align-items: center; color: #fff; font-size: 11.500px;
    background: linear-gradient(90deg, #282b2a 0, #252a2c 60px, #232a35 120px, #212449 190px, #20224a 250px, #212439 320px, #22242f 400px, #23242f 560px, #1f2148 690px, #24263a 790px, #1f2144 890px, #212440 1000px, #22233c 1100px, #202247 1190px, #26272f 1300px, #27282c 1366px);
  }
  .weather { width: 387px; padding-left: 19px; display: flex; align-items: center; gap: 6px; }
  .pic { position: relative; }
  .pic b { position: absolute; left: 11px; top: -11px; width: 16px; height: 16px; border-radius: 8px; background: #ff99a4; color: #111; font: 400 11px/16px 'Open Sans', sans-serif; text-align: center; }
  .lines { display: flex; flex-direction: column; }
  .lines span, .lines small { align-self: flex-start; font-size: 11.500px; line-height: 16px; }
  .lines small { color: #c9cacc; }
  .win { width: 61px; }
  .tsearch { margin-left: -6px; width: 220px; height: 32px; border-radius: 16px; background: #464854; border: 1px solid #5b5c66; display: flex; align-items: center; padding: 0 11px; gap: 10px; color: #d4d4d8; font-size: 12px; }
  .tsearch span { margin-right: auto; }
  .apps { display: flex; margin-left: 2px; }
  .app { position: relative; width: 44px; height: 40px; display: flex; align-items: center; justify-content: center; }
  .focus::before { content: ''; position: absolute; inset: 0 2px; border-radius: 4px; background: #ffffff14; border: 1px solid #ffffff12; }
  .run::after { content: ''; position: absolute; bottom: 1px; left: 19px; width: 6px; height: 3px; border-radius: 2px; background: #9899a3; }
  .focus::after { left: 14px; width: 16px; background: #b0afae; }
  .tray { display: flex; margin-left: 104px; }
  .tray .cell { width: 24px; }
  .tray .cell.wide { width: 32px; }
  .tray .first { margin-left: 4px; }
  .clock { width: 75px; display: flex; flex-direction: column; align-items: flex-end; }
  .notify { width: 30px; }
</style>
